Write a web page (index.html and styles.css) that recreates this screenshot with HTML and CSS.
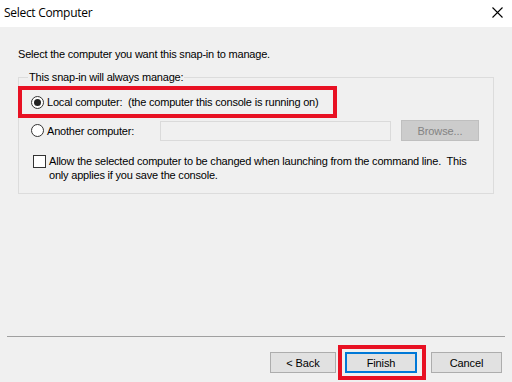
FILE: index.html
```html
<!DOCTYPE html>
<html lang="en">
<head>
  <meta charset="UTF-8" />
  <title>Select Computer</title>
  <link rel="stylesheet" href="styles.css">
</head>
<body>
  <div class="window">
    <div class="titlebar">
      <span class="title">Select Computer</span>
      <svg class="close" width="11" height="11" viewBox="0 0 11 11">
        <path d="M0.5 0.5 L10.5 10.5 M10.5 0.5 L0.5 10.5" stroke="#000" stroke-width="1.1" fill="none" />
      </svg>
    </div>

    <div class="content">
      <p class="intro">Select the computer you want this snap-in to manage.</p>

      <fieldset class="group">
        <legend>This snap-in will always manage:</legend>

        <div class="row mark">
          <span class="radio checked"></span>
          <span class="label">Local computer:&nbsp; (the computer this console is running on)</span>
        </div>

        <div class="row other">
          <span class="radio"></span>
          <span class="label">Another computer:</span>
          <input class="computer-name" type="text" disabled />
          <button class="btn browse" disabled>Browse...</button>
        </div>

        <div class="row check-row">
          <span class="checkbox"></span>
          <span class="label">Allow the selected computer to be changed when launching from the command line.&nbsp; This<br>only applies if you save the console.</span>
        </div>
      </fieldset>
    </div>

    <div class="footer">
      <div class="separator"></div>
      <div class="buttons">
        <button class="btn back">&lt; Back</button>
        <div class="finish-mark">
          <button class="btn finish">Finish</button>
        </div>
        <button class="btn cancel">Cancel</button>
      </div>
    </div>
  </div>
</body>
</html>
```

FILE: styles.css
```css
* {
  box-sizing: border-box;
}

body {
  margin: 0;
  font-family: 'Liberation Sans', Arial, sans-serif;
  font-size: 11px;
  letter-spacing: -0.2px;
  color: #000;
  background: #f0f0f0;
}

.window {
  width: 512px;
  height: 382px;
  display: flex;
  flex-direction: column;
  background: #f0f0f0;
}

.titlebar {
  height: 27px;
  background: #fff;
  display: flex;
  align-items: center;
  justify-content: space-between;
  padding: 0 9px 2px 4px;
  flex-shrink: 0;
}

.title {
  font-family: 'Open Sans', 'Liberation Sans', sans-serif;
  font-size: 12px;
  letter-spacing: -0.3px;
}

.close {
  display: block;
}

.content {
  padding: 21px 18px 0 18px;
}

.intro {
  margin: 0;
  line-height: 13px;
}

.group {
  margin: 10px 0 0 0;
  border: 1px solid #dcdcdc;
  padding: 2px 12px 11px 12px;
  min-width: 0;
}

.group legend {
  padding: 0 1px;
  margin-left: -3px;
  line-height: 13px;
}

.row {
  display: flex;
  align-items: center;
}

.label {
  line-height: 14px;
  white-space: nowrap;
  flex-shrink: 0;
}

.radio {
  width: 13px;
  height: 13px;
  border: 1px solid #333;
  border-radius: 50%;
  background: #fff;
  margin-right: 3px;
  flex-shrink: 0;
  display: flex;
  align-items: center;
  justify-content: center;
}

.radio.checked::after {
  content: '';
  width: 7px;
  height: 7px;
  border-radius: 50%;
  background: #222;
}

.mark {
  width: 319px;
  height: 32px;
  margin-left: -13px;
  padding-left: 9px;
  border: 4px solid #e81123;
}

.other {
  margin-top: 2px;
  height: 21px;
}

.computer-name {
  margin: 0 0 0 auto;
  width: 231px;
  height: 20px;
  border: 1px solid #dadada;
  background: #f0f0f0;
}

.btn {
  font-family: 'Liberation Sans', Arial, sans-serif;
  font-size: 11px;
  letter-spacing: -0.1px;
  height: 21px;
  background: #e1e1e1;
  border: 1px solid #adadad;
  color: #000;
  padding: 0;
}

.browse {
  margin: 0 2px 0 10px;
  width: 78px;
  background: #cccccc;
  border-color: #bfbfbf;
  color: #838383;
}

.check-row {
  margin-top: 13px;
  align-items: flex-start;
}

.checkbox {
  width: 13px;
  height: 13px;
  margin: 1px 3px 0 2px;
  border: 1px solid #333;
  background: #fff;
  flex-shrink: 0;
}

.footer {
  margin-top: auto;
  padding-bottom: 2px;
}

.separator {
  height: 1px;
  margin: 0 7px;
  background: #a0a0a0;
}

.buttons {
  display: flex;
  align-items: center;
  justify-content: flex-end;
  padding: 8px 10px 0 0;
}

.back {
  width: 66px;
}

.finish-mark {
  margin-left: 2px;
  border: 4px solid #e81123;
  padding: 3px 5px 3px 3px;
}

.finish {
  width: 72px;
  border: 2px solid #0078d7;
}

.cancel {
  width: 71px;
  margin-left: 5px;
}
```
